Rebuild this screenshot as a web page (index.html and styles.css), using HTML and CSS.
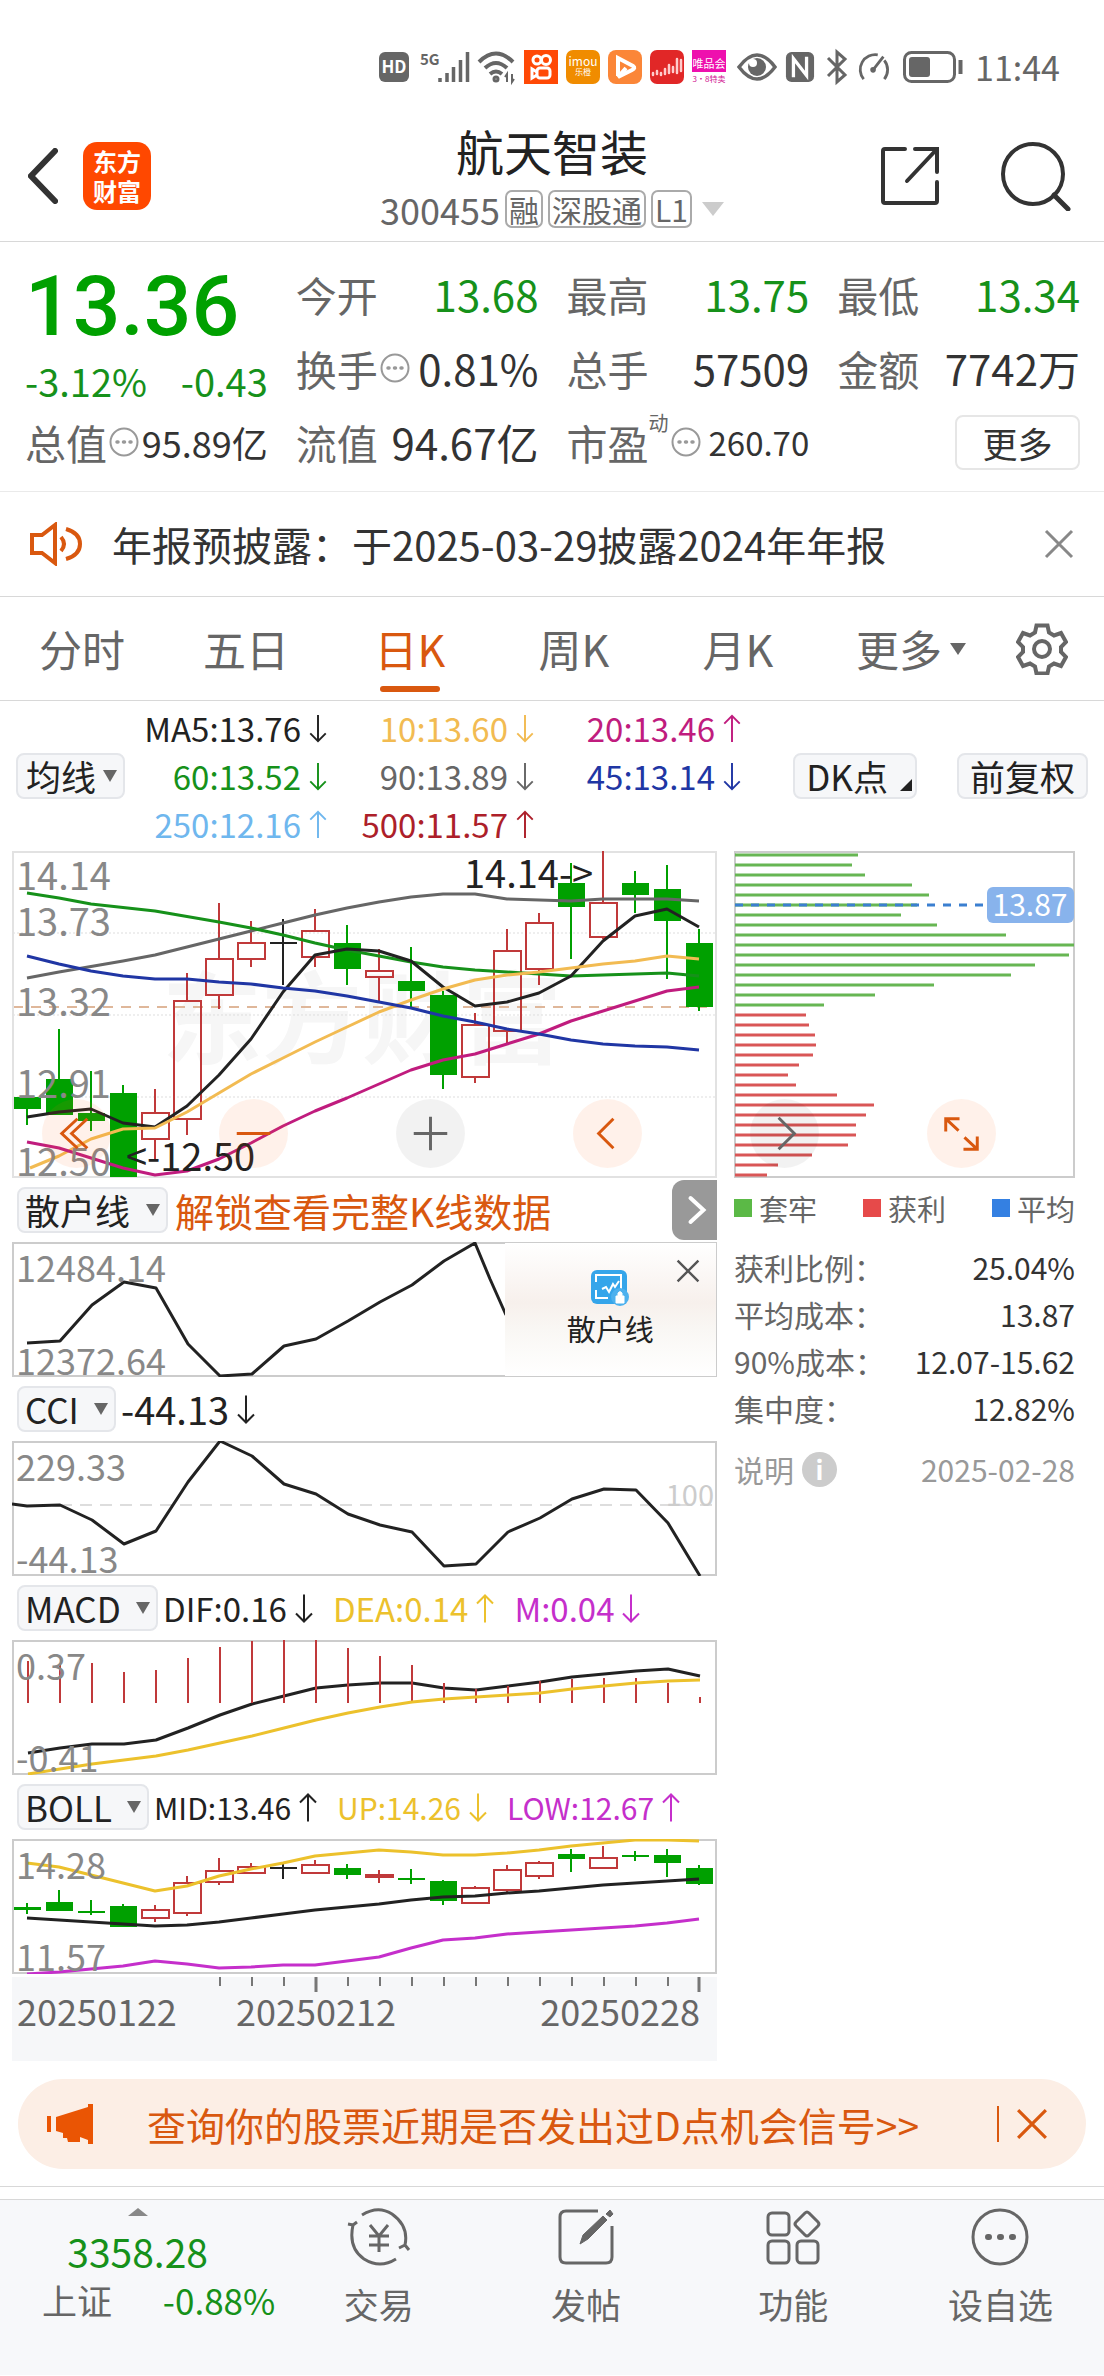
FILE: index.html
```html
<!DOCTYPE html>
<html lang="zh-CN">
<head>
    <meta charset="UTF-8">
    <meta name="viewport" content="width=device-width, initial-scale=1.0">
    <title>航天智装 300455</title>
    <link rel="stylesheet" href="styles.css">
</head>
<body>
    <svg class="sprite" aria-hidden="true">
        <symbol id="down" viewBox="0 0 18 30"><path d="M9 1v27M1 20l8 8 8-8"/></symbol>
        <symbol id="up" viewBox="0 0 18 30"><path d="M9 29V2M1 10l8-8 8 8"/></symbol>
        <symbol id="close" viewBox="0 0 30 30"><path d="M2 2l26 26M28 2L2 28"/></symbol>
        <symbol id="dots" viewBox="0 0 30 30"><circle cx="15" cy="15" r="13.5"/><path d="M8 15h1M14.500 15h1M21 15h1" stroke-width="3.500" stroke-linecap="round"/></symbol>
    </svg>

    <div class="status-bar">
        <svg class="hd" viewBox="0 0 30 30"><rect width="30" height="30" rx="6" fill="#666"/><text x="15" y="21" text-anchor="middle">HD</text></svg>
        <svg class="signal" viewBox="0 0 50 32"><text x="0" y="14">5G</text><path d="M20 27v4M27 22v9M33.500 16v15M40.500 9v22M47.500 1v30" stroke="#666" stroke-width="3.500"/></svg>
        <svg class="wifi" viewBox="0 0 38 32"><g stroke="#666" stroke-width="4"><path d="M1 11Q18 -6 35 11M7 17Q18 7 29 17M12 23q6-5 12 0"/><circle cx="18" cy="28" r="2" stroke-width="3"/><path d="M29 31v-8l-2 3M34 23v8l2-3" stroke-width="2"/></g></svg>
        <svg class="app" viewBox="0 0 34 34"><rect width="34" height="34" fill="#ff4906"/><g fill="none" stroke="#fff" stroke-width="3"><circle cx="13" cy="10" r="4"/><circle cx="22" cy="10" r="4.500"/><rect x="13" y="18" width="13" height="10" rx="3"/><path d="M13 22l-5-3v9l5-3"/></g></svg>
        <svg class="app" viewBox="0 0 34 34"><rect width="34" height="34" rx="7" fill="#f08c00"/><text x="17" y="16" font-size="12" text-anchor="middle" fill="#fff">imou</text><text x="17" y="25" font-size="8" text-anchor="middle" fill="#fff">乐橙</text></svg>
        <svg class="app" viewBox="0 0 34 34"><rect width="34" height="34" rx="8" fill="#fb8638"/><path d="M10 26V8l15 8q3 2-1 4L10 27l8-9" fill="none" stroke="#fff" stroke-width="4"/></svg>
        <svg class="app" viewBox="0 0 34 34"><rect width="34" height="34" rx="7" fill="#e12727"/><path d="M3 23v2M7 21v3M11 23v2M15 19v5M19 15v8M23 17v5M27 9v14M31 10v11" fill="none" stroke="#fcc" stroke-width="2.500" stroke-linecap="round"/></svg>
        <svg class="app" viewBox="0 0 34 34"><rect width="34" height="22" fill="#ee10ae"/><text x="17" y="18" font-size="11" text-anchor="middle" fill="#fff">唯品会</text><text x="17" y="32" font-size="8" text-anchor="middle" fill="#d0108f">3·8特卖</text></svg>
        <svg class="eye" viewBox="0 0 40 32"><path d="M2 16Q20-8 38 16 20 40 2 16z" fill="none" stroke="#666" stroke-width="3.500"/><circle cx="20" cy="16" r="9" fill="#666"/><circle cx="16" cy="12" r="4" fill="#fff"/></svg>
        <svg class="nfc" viewBox="0 0 30 32"><rect width="30" height="32" rx="6" fill="#666"/><path d="M8 27V7l14 18V5" fill="none" stroke="#fff" stroke-width="3.500"/></svg>
        <svg class="bt" viewBox="0 0 22 34"><path d="M2 8l17 17-8 7V2l8 7L2 26" fill="none" stroke="#666" stroke-width="3"/></svg>
        <svg class="gauge" viewBox="0 0 36 32"><path d="M7 29A16 16 0 0 1 22 3M29 9a16 16 0 0 1 0 20M28 5L17 19" fill="none" stroke="#666" stroke-width="3"/><circle cx="17" cy="19" r="3" fill="#666"/></svg>
        <svg class="battery" viewBox="0 0 60 32"><rect x="1.500" y="1.500" width="50" height="29" rx="7" fill="none" stroke="#666" stroke-width="3"/><rect x="6" y="6" width="21" height="20" rx="3" fill="#666"/><path d="M57.500 9v14" stroke="#666" stroke-width="4"/></svg>
        <span class="clock">11:44</span>
    </div>

    <header class="header">
        <div class="header-left">
            <button class="icon-btn" aria-label="返回"><svg width="30" height="56" viewBox="2 0 30 56"><path d="M29 3L5 28l24 25" stroke-width="6"/></svg></button>
            <a class="logo" href="#">东方<br>财富</a>
        </div>
        <div class="header-title">
            <h1>航天智装</h1>
            <div class="code">300455 <span class="tag">融</span><span class="tag">深股通</span><span class="tag">L1</span><i class="caret"></i></div>
        </div>
        <div class="header-right">
            <button class="icon-btn" aria-label="分享"><svg width="60" height="60" viewBox="0 0 60 60"><path d="M25 3H5q-2 0-2 2v50q0 2 2 2h50q2 0 2-2V36M35 3h22v23M57 3L27 35" stroke-width="4"/></svg></button>
            <button class="icon-btn" aria-label="搜索"><svg width="76" height="70" viewBox="0 0 76 70"><circle cx="33" cy="33" r="30" stroke-width="4"/><path d="M54 54l14 14" stroke-width="5"/></svg></button>
        </div>
    </header>

    <section class="quote">
        <div class="price">
            <strong>13.36</strong>
            <div class="change"><span>-3.12%</span><span>-0.43</span></div>
        </div>
        <div class="stat"><span>今开</span><b class="fall">13.68</b></div>
        <div class="stat"><span>最高</span><b class="fall">13.75</b></div>
        <div class="stat"><span>最低</span><b class="fall">13.34</b></div>
        <div class="stat"><span>换手<svg class="info"><use href="#dots"/></svg></span><b>0.81%</b></div>
        <div class="stat"><span>总手</span><b>57509</b></div>
        <div class="stat"><span>金额</span><b>7742万</b></div>
        <div class="stat"><span>总值<svg class="info"><use href="#dots"/></svg></span><b class="mid">95.89亿</b></div>
        <div class="stat"><span>流值</span><b>94.67亿</b></div>
        <div class="stat"><span>市盈<sup>动</sup><svg class="info"><use href="#dots"/></svg></span><b class="small">260.70</b></div>
        <div class="stat"><button class="more-btn">更多</button></div>
    </section>

    <div class="notice">
        <svg class="speaker" viewBox="0 0 52 44"><path d="M2 13h10L25 3v38L12 31H2zM31 15q6 7 0 14M36 7q14 4 14 15t-14 15"/></svg>
        <p>年报预披露：于2025-03-29披露2024年年报</p>
        <button class="close" aria-label="关闭"><svg><use href="#close"/></svg></button>
    </div>

    <nav class="tabs">
        <button>分时</button>
        <button>五日</button>
        <button class="active">日K</button>
        <button>周K</button>
        <button>月K</button>
        <button>更多<i class="caret"></i></button>
        <button aria-label="设置"><svg class="gear" viewBox="0 0 52 52"><path d="M20.500 2.500h11l1.500 7 5 3 7-2.500 5 9-5 5v5l5 5-5 9-7-2.500-5 3-1.500 7h-11l-1.500-7-5-3-7 2.500-5-9 5-5v-5l-5-5 5-9 7 2.500 5-3z"/><circle cx="26" cy="26" r="8"/></svg></button>
    </nav>

    <section class="ma">
        <span class="picker tight"><select aria-label="主图指标"><option>均线</option></select></span>
        <div class="ma-list">
            <span class="black">MA5:13.76<svg class="arrow"><use href="#down"/></svg></span>
            <span class="amber">10:13.60<svg class="arrow"><use href="#down"/></svg></span>
            <span class="pink">20:13.46<svg class="arrow"><use href="#up"/></svg></span>
            <span class="green">60:13.52<svg class="arrow"><use href="#down"/></svg></span>
            <span class="gray">90:13.89<svg class="arrow"><use href="#down"/></svg></span>
            <span class="blue">45:13.14<svg class="arrow"><use href="#down"/></svg></span>
            <span class="sky">250:12.16<svg class="arrow"><use href="#up"/></svg></span>
            <span class="crimson">500:11.57<svg class="arrow"><use href="#up"/></svg></span>
        </div>
        <div class="ma-actions">
            <button class="chip">DK点<i class="corner"></i></button>
            <button class="chip">前复权</button>
        </div>
    </section>

    <main class="board">
        <div class="charts">
            <div class="panel">
                <svg class="chart" viewBox="12 12 705 327">
                    <text class="watermark" x="162" y="217">东方财富</text>
                    <path class="dotted" d="M13 94h703M13 176h703M13 258h703"/>
                    <path class="last" d="M13 168h703"/>
                    <rect class="frame" x="13" y="13" width="703" height="325"/>
                    <path class="wick g" d="M27 244v42M59 190v80M91 232v60M123 246v20M347 86v60M411 108v60M443 152v98M571 24v96M635 32v42M667 26v114M699 90v82"/>
                    <path class="fill g" d="M14 258h27v12h-27zM46 240h27v36h-27zM78 274h27v8h-27zM110 254h27v84h-27zM334 104h27v26h-27zM398 142h27v10h-27zM430 156h27v80h-27zM558 44h27v24h-27zM622 44h27v12h-27zM654 50h27v32h-27zM686 104h27v64h-27z"/>
                    <path class="wick r" d="M155 250v24M155 300v20M187 134v28M187 280v16M219 64v56M219 156v14M251 82v22M251 120v8M315 70v22M315 118v10M379 110v22M379 138v24M475 174v12M475 238v6M507 90v22M507 192v12M539 74v10M539 130v16M603 12v52M603 98v2"/>
                    <path class="hollow r" d="M142 274h27v26h-27zM174 162h27v118h-27zM206 120h27v36h-27zM238 104h27v16h-27zM302 92h27v26h-27zM366 132h27v6h-27zM462 186h27v52h-27zM494 112h27v80h-27zM526 84h27v46h-27zM590 64h27v34h-27z"/>
                    <path class="wick k" d="M283 80v66M270 104h27"/>
                    <polyline class="line gray" points="27,139 59,133 123,122 155,116 187,108 219,100 251,92 283,84 315,76 347,69 379,63 411,58 443,55 475,55 507,60 571,62 603,60 667,60 699,62"/>
                    <polyline class="line green" points="27,54 59,59 91,65 155,72 219,83 251,89 283,96 315,104 347,111 379,117 411,123 443,128 475,131 507,133 539,135 571,137 603,136 635,135 667,134 699,137"/>
                    <polyline class="line black" points="27,278 59,273 91,270 123,284 155,288 187,267 219,236 251,200 283,153 315,116 347,110 379,112 411,122 443,148 475,167 507,163 539,154 571,137 603,102 635,77 667,70 699,88"/>
                    <polyline class="line amber" points="30,329 59,317 91,300 123,290 155,289 187,273 219,254 251,235 283,219 315,203 347,188 379,173 411,161 443,150 475,141 507,136 539,133 571,129 603,125 635,122 667,117 699,120"/>
                    <polyline class="line pink" points="27,303 59,309 91,319 123,329 155,336 187,332 219,320 251,304 283,287 315,272 347,259 379,245 411,231 443,221 475,215 507,205 539,195 571,182 603,172 635,162 667,152 699,148"/>
                    <polyline class="line blue" points="27,117 59,125 91,132 123,137 155,140 187,140 219,143 251,145 283,149 315,152 347,157 379,163 411,169 443,177 475,183 507,190 539,195 571,201 603,205 635,207 667,208 699,211"/>
                    <g class="scale">
                        <text x="16" y="51">14.14</text>
                        <text x="16" y="97">13.73</text>
                        <text x="16" y="177">13.32</text>
                        <text x="16" y="259">12.91</text>
                        <text x="16" y="337">12.50</text>
                    </g>
                    <g class="mark">
                        <text x="464" y="49">14.14-&gt;</text>
                        <text x="126" y="332">&lt;-12.50</text>
                    </g>
                </svg>
                <div class="tools">
                    <button aria-label="最左"><svg viewBox="0 0 70 70"><path d="M36 20L20 35l16 15M46 20L30 35l16 15"/></svg></button>
                    <button aria-label="缩小"><svg viewBox="0 0 70 70"><path d="M18 35h34"/></svg></button>
                    <button class="dim" aria-label="放大"><svg viewBox="0 0 70 70"><path d="M18 35h34M35 18v34"/></svg></button>
                    <button aria-label="左移"><svg viewBox="0 0 70 70"><path d="M41 20L26 35l15 15"/></svg></button>
                </div>
            </div>

            <div class="row">
                <span class="picker"><select aria-label="副图指标一"><option>散户线</option></select></span>
                <a class="unlock" href="#">解锁查看完整K线数据</a>
                <button class="next" aria-label="展开"><svg viewBox="0 0 44 60"><path d="M18 18l13 12-13 12"/></svg></button>
            </div>
            <div class="panel">
                <svg class="chart" viewBox="12 13 705 135">
                    <rect class="frame dark" x="13" y="14" width="703" height="133"/>
                    <polyline class="line black" points="27,114 60,112 92,76 124,53 156,59 188,115 220,147 252,145 284,117 316,110 348,92 380,73 412,56 444,32 475,14 490,50 506,86"/>
                    <g class="sub-scale"><text x="16" y="53">12484.14</text><text x="16" y="146">12372.64</text></g>
                </svg>
                <div class="locked">
                    <svg class="lock-icon" viewBox="0 0 38 36"><rect width="36" height="34" rx="6" fill="#35a5ea"/><path d="M5 12V5h25v16M5 20v8h12M11 19l4-2 3 5 4-8 2 3 4-6" fill="none" stroke="#fff" stroke-width="2"/><circle cx="29" cy="27" r="9" fill="#4db1ee"/><path d="M25 26h8v7h-8zM27 26v-3q2-3 4 0v3" fill="#fff" stroke="#fff"/></svg>
                    <span>散户线</span>
                    <button class="close" aria-label="关闭"><svg><use href="#close"/></svg></button>
                </div>
            </div>

            <div class="row">
                <span class="picker"><select aria-label="副图指标二"><option>CCI</option></select></span>
                <span class="value big black">-44.13<svg class="arrow"><use href="#down"/></svg></span>
            </div>
            <svg class="chart" viewBox="12 212 705 135">
                <rect class="frame dark" x="13" y="213" width="703" height="133"/>
                <path class="level" d="M60 276h656"/>
                <text class="level-text" x="714" y="277">100</text>
                <polyline class="line black" points="12,275 27,277 60,276 92,291 124,315 156,302 188,253 220,212 252,227 284,255 316,265 348,285 380,296 412,303 444,337 476,335 508,303 540,289 572,270 604,260 636,261 668,294 700,347"/>
                <g class="sub-scale"><text x="16" y="252">229.33</text><text x="16" y="344">-44.13</text></g>
            </svg>

            <div class="row">
                <span class="picker"><select aria-label="副图指标三"><option>MACD</option></select></span>
                <span class="value black">DIF:0.16<svg class="arrow"><use href="#down"/></svg></span>
                <span class="value gold">DEA:0.14<svg class="arrow"><use href="#up"/></svg></span>
                <span class="value violet">M:0.04<svg class="arrow"><use href="#down"/></svg></span>
            </div>
            <svg class="chart" viewBox="12 71 705 135">
                <rect class="frame dark" x="13" y="72" width="703" height="133"/>
                <polyline class="line black" points="28,184 60,179 92,175 124,175 156,171 188,159 220,146 252,135 284,127 316,119 348,116 380,114 412,114 444,119 476,121 508,117 540,113 572,108 604,105 636,102 668,100 700,107"/>
                <path class="wick r" d="M28 92v42M60 96v38M92 94v40M124 103v31M156 101v33M188 89v45M220 78v56M252 72v62M284 71v63M316 71v63M348 79v55M380 87v47M412 96v38M444 114v20M476 120v14M508 117v17M540 112v22M572 110v24M604 109v25M636 109v25M668 114v20M700 128v6"/>
                <polyline class="line gold" points="28,205 60,200 92,195 124,191 156,187 188,181 220,174 252,167 284,159 316,151 348,144 380,138 412,133 444,130 476,128 508,126 540,124 572,120 604,117 636,114 668,112 700,111"/>
                <g class="sub-scale"><text x="16" y="111">0.37</text><text x="16" y="203">-0.41</text></g>
            </svg>

            <div class="row">
                <span class="picker"><select aria-label="副图指标四"><option>BOLL</option></select></span>
                <span class="value narrow black">MID:13.46<svg class="arrow"><use href="#up"/></svg></span>
                <span class="value narrow gold">UP:14.26<svg class="arrow"><use href="#down"/></svg></span>
                <span class="value narrow violet">LOW:12.67<svg class="arrow"><use href="#up"/></svg></span>
            </div>
            <svg class="chart" viewBox="12 270 705 135">
                <rect class="frame dark" x="13" y="271" width="703" height="133"/>
                <path class="wick g" d="M27 334v11M59 321v15M91 331v15M123 335v5M347 295v15M411 300v15M443 311v25M571 280v23M635 282v10M667 280v28M699 296v20"/>
                <path class="fill g" d="M14 338h27v3h-27zM46 333h27v9h-27zM78 342h27v2h-27zM110 337h27v21h-27zM334 299h27v7h-27zM398 309h27v2h-27zM430 312h27v20h-27zM558 285h27v5h-27zM622 286h27v2h-27zM654 286h27v8h-27zM686 299h27v16h-27z"/>
                <path class="wick r" d="M155 336v5M155 349v4M187 307v7M187 344v3M219 289v13M219 313v3M251 294v4M315 291v5M379 301v13M475 317v2M507 296v5M507 321v3M539 292v2M539 307v3M603 277v12"/>
                <path class="hollow r" d="M142 341h27v8h-27zM174 314h27v30h-27zM206 302h27v11h-27zM238 298h27v6h-27zM302 296h27v8h-27zM366 306h27v2h-27zM462 319h27v15h-27zM494 301h27v20h-27zM526 294h27v13h-27zM590 289h27v10h-27z"/>
                <path class="wick k" d="M283 293v17M270 299h27"/>
                <polyline class="line gold" points="27,294 59,298 91,306 123,314 155,322 187,317 219,307 251,300 283,294 315,287 347,284 379,281 411,283 443,286 475,286 507,284 539,281 571,277 603,274 635,271 667,271 699,272"/>
                <polyline class="line black" points="27,349 59,351 91,353 123,355 155,357 187,356 219,353 251,349 283,345 315,341 347,338 379,335 411,331 443,328 475,327 507,324 539,322 571,319 603,316 635,314 667,312 699,310"/>
                <polyline class="line violet" points="27,405 59,403 91,400 123,397 155,392 187,395 219,399 251,398 283,396 315,396 347,392 379,388 411,379 443,371 475,369 507,365 539,363 571,361 603,359 635,357 667,354 699,350"/>
                <g class="sub-scale"><text x="16" y="310">14.28</text><text x="16" y="402">11.57</text></g>
            </svg>
            <svg class="chart axis" viewBox="12 0 705 84">
                <path d="M220 0v9M252 0v9M284 0v9M348 0v9M380 0v9M412 0v9M444 0v9M476 0v9M508 0v9M540 0v9M572 0v9M604 0v9M636 0v9M668 0v9"/>
                <path class="major" d="M316 0v15M699 0v15"/>
                <text x="17" y="49">20250122</text>
                <text x="316" y="49" text-anchor="middle">20250212</text>
                <text x="700" y="49" text-anchor="end">20250228</text>
            </svg>
        </div>

        <aside class="chips">
            <div class="panel">
                <svg class="chart" viewBox="0 0 341 327">
                    <rect class="frame dark" x="1" y="1" width="339" height="325"/>
                    <path class="bars trapped" d="M1 4h123M1 14h117M1 24h130M1 34h177M1 44h194M1 54h182M1 64h166M1 74h202M1 84h271M1 94h339M1 104h334M1 114h300M1 124h276M1 134h199M1 144h140M1 154h89"/>
                    <path class="bars profit" d="M1 164h71M1 174h74M1 184h80M1 194h81M1 204h78M1 214h64M1 224h53M1 234h61M1 244h102M1 254h139M1 264h131M1 274h121M1 284h121M1 294h113M1 304h77M1 314h43M1 324h32"/>
                    <path class="avg" d="M1 54h248"/>
                    <rect class="badge" x="253" y="36" width="87" height="36" rx="6"/>
                    <text class="avg-text" x="296" y="65">13.87</text>
                </svg>
                <div class="tools">
                    <button class="dim" aria-label="右移"><svg viewBox="0 0 70 70"><path d="M29 19l16 16-16 16"/></svg></button>
                    <button aria-label="全屏"><svg viewBox="0 0 70 70"><path d="M19 33V20h14M20 21l12 11M51 38v13H37M50 50L38 39"/></svg></button>
                </div>
            </div>
            <ul class="legend">
                <li><i class="box-green"></i>套牢</li>
                <li><i class="box-red"></i>获利</li>
                <li><i class="box-blue"></i>平均</li>
            </ul>
            <dl class="facts">
                <div><dt>获利比例：</dt><dd>25.04%</dd></div>
                <div><dt>平均成本：</dt><dd>13.87</dd></div>
                <div><dt>90%成本：</dt><dd>12.07-15.62</dd></div>
                <div><dt>集中度：</dt><dd>12.82%</dd></div>
            </dl>
            <div class="explain"><span>说明<i>i</i></span><span>2025-02-28</span></div>
        </aside>
    </main>

    <div class="promo">
        <svg class="horn" viewBox="0 0 46 40"><path d="M0 12h4v16H0zM9 13L41 3V0h5v40h-5v-4l-8-3v5H21l-1-4h-4v-5l-7-2z"/></svg>
        <a href="#">查询你的股票近期是否发出过D点机会信号&gt;&gt;</a>
        <button class="close" aria-label="关闭"><svg><use href="#close"/></svg></button>
    </div>

    <footer class="bottom">
        <a class="index" href="#">
            <i class="caret-up"></i>
            <b>3358.28</b>
            <span class="index-row"><span>上证</span><em>-0.88%</em></span>
        </a>
        <a class="item" href="#">
            <svg viewBox="0 0 66 58"><path d="M16 7Q32-3 46 6q17 12 13 31l4 5M59 37l-6 3M50 51Q34 61 18 51 2 40 7 17l-5-1M7 17l4-3M24 17l9 11 9-11M23 28h20M23 37h20M33 28v16"/></svg>
            交易
        </a>
        <a class="item" href="#">
            <svg viewBox="0 0 66 58"><path d="M45 3H13q-6 0-6 6v40q0 6 6 6h40q6 0 6-6V18"/><path d="M27 36l3-9L50 8l4 4-19 19zM53 6l4-4 3 4-3 3z" fill="#666" stroke-width="1"/></svg>
            发帖
        </a>
        <a class="item" href="#">
            <svg viewBox="0 0 66 58"><rect x="8" y="5" width="21" height="22" rx="4"/><rect x="8" y="33" width="21" height="22" rx="4"/><rect x="37" y="33" width="21" height="22" rx="4"/><path d="M45 5q2-2 4 0l9 9q2 2 0 4l-9 9q-2 2-4 0l-9-9q-2-2 0-4z"/></svg>
            功能
        </a>
        <a class="item" href="#">
            <svg viewBox="0 0 66 58"><circle cx="33" cy="29" r="27"/><path d="M21 29h1M33 29h1M45 29h1" stroke-width="6" stroke-linecap="round"/></svg>
            设自选
        </a>
    </footer>
</body>
</html>
```
FILE: styles.css
```css
* {
    box-sizing: border-box;
}

body {
    margin: 0;
    background: #fff;
    color: #333;
    font-family: "Noto Sans CJK SC", sans-serif;
    font-size: 34px;
    line-height: 48px;
}

h1, p, ul, dl, dd {
    margin: 0;
    padding: 0;
}

button, select {
    margin: 0;
    padding: 0;
    border: none;
    background: none;
    color: inherit;
    font: inherit;
    cursor: pointer;
}

a {
    color: inherit;
    text-decoration: none;
}

i, em {
    font-style: normal;
}

svg {
    display: block;
    flex: none;
    fill: none;
    stroke: currentColor;
}

text {
    stroke: none;
}

.sprite {
    position: absolute;
    width: 0;
    height: 0;
}

/* colours */
.black { color: #222; }
.amber { color: #f2bb52; }
.pink { color: #c01c7e; }
.green { color: #16911a; }
.gray { color: #666; }
.blue { color: #2036a4; }
.sky { color: #6fb7ee; }
.crimson { color: #ad1f2a; }
.gold { color: #ecc12c; }
.violet { color: #c52fcb; }
.g { color: #00a000; }
.r { color: #c0393a; }
.k { color: #222; }

/* status bar */
.status-bar {
    display: flex;
    align-items: center;
    justify-content: flex-end;
    gap: 8px;
    padding: 44px 44px 0;
    color: #666;
}

.status-bar svg {
    height: 34px;
    overflow: visible;
    stroke: none;
}

.status-bar .hd { width: 30px; height: 30px; }
.status-bar .signal { width: 50px; height: 32px; margin-left: 3px; }
.status-bar .wifi { width: 38px; height: 32px; }
.status-bar .app { width: 34px; }
.status-bar .eye { width: 40px; height: 32px; margin-left: 3px; }
.status-bar .nfc { width: 30px; height: 30px; }
.status-bar .bt { width: 22px; margin-left: 3px; }
.status-bar .gauge { width: 36px; height: 30px; }
.status-bar .battery { width: 60px; height: 32px; margin-left: 3px; }

.hd text {
    fill: #fff;
    font-size: 17px;
    font-weight: 700;
}

.signal text {
    fill: #666;
    font-size: 15px;
    font-weight: 700;
}

.clock {
    padding-left: 4px;
    font-size: 34px;
    line-height: 46px;
}

/* header */
.header {
    display: grid;
    grid-template-columns: 1fr auto 1fr;
    align-items: center;
    padding: 30px 28px 9px;
    border-bottom: 1px solid #d8d8d8;
}

.header-left, .header-right {
    display: flex;
    align-items: center;
    gap: 25px;
}

.header-right {
    justify-content: flex-end;
    gap: 60px;
}

.icon-btn svg {
    stroke-linecap: round;
}

.logo {
    width: 68px;
    height: 68px;
    padding: 4px 0;
    border-radius: 14px;
    background: #ff4800;
    color: #fff;
    font-size: 24px;
    font-weight: 700;
    line-height: 30px;
    text-align: center;
}

.header-title h1 {
    margin-bottom: 6px;
    color: #222;
    font-size: 48px;
    font-weight: 400;
    line-height: 60px;
    text-align: center;
}

.code {
    display: flex;
    align-items: center;
    gap: 5px;
    color: #666;
    font-size: 36px;
    line-height: 46px;
}

.tag {
    padding: 0 2px;
    border: 2px solid #aaa;
    border-radius: 7px;
    font-size: 30px;
    line-height: 34px;
}

.caret {
    border: 8px solid transparent;
    border-top: 12px solid #666;
    border-bottom: 0;
}

.code .caret {
    margin-left: 5px;
    border-width: 14px 11px 0;
    border-top-color: #ccc;
}

/* quote */
.quote {
    display: grid;
    grid-template-columns: repeat(4, 1fr);
    column-gap: 28px;
    padding: 15px 24px 12px 25px;
    border-bottom: 1px solid #eaeaea;
}

.price {
    grid-row: span 2;
    color: #00a000;
}

.price strong {
    display: block;
    font-family: Roboto, "Noto Sans CJK SC", sans-serif;
    font-size: 84px;
    font-weight: 500;
    line-height: 100px;
}

.change {
    display: flex;
    justify-content: space-between;
    color: #16911a;
    font-size: 38px;
}

.stat {
    display: flex;
    align-items: center;
    justify-content: space-between;
    color: #666;
    font-size: 41px;
    line-height: 74px;
    white-space: nowrap;
}

.stat span {
    display: flex;
    align-items: center;
}

.stat b {
    color: #333;
    font-size: 42px;
    font-weight: 400;
}

.stat b.fall { color: #16911a; }
.stat b.mid { font-size: 36px; }
.stat b.small { font-size: 33px; }

.stat sup {
    align-self: flex-start;
    font-size: 20px;
    line-height: 36px;
}

.info {
    width: 30px;
    height: 30px;
    margin: 0 2px;
    color: #999;
    stroke-width: 2;
}

.more-btn {
    width: 125px;
    margin-left: auto;
    border: 2px solid #e6e6e6;
    border-radius: 8px;
    color: #333;
    font-size: 35px;
    line-height: 51px;
}

/* notice */
.notice {
    display: flex;
    align-items: center;
    padding: 28px 30px;
    border-bottom: 1px solid #d8d8d8;
    font-size: 40px;
}

.speaker {
    width: 52px;
    height: 44px;
    margin-right: 30px;
    color: #d9580f;
    stroke-width: 4;
}

.close {
    margin-left: auto;
    color: #888;
}

.close svg {
    width: 30px;
    height: 30px;
    stroke-width: 3;
}

/* tabs */
.tabs {
    display: grid;
    grid-template-columns: repeat(5, 164fr) 182fr 80fr;
    padding-right: 22px;
    border-bottom: 1px solid #d8d8d8;
    color: #666;
    font-size: 43px;
    line-height: 103px;
}

.tabs button {
    position: relative;
    display: flex;
    align-items: center;
    justify-content: center;
    gap: 8px;
}

.tabs .active {
    color: #d9580f;
}

.tabs .active::after {
    position: absolute;
    bottom: 8px;
    left: 50%;
    width: 60px;
    height: 6px;
    margin-left: -30px;
    border-radius: 3px;
    background: #d9580f;
    content: "";
}

.gear {
    width: 52px;
    height: 52px;
    stroke-width: 4;
}

/* moving averages */
.ma {
    display: flex;
    align-items: center;
    padding: 3px 16px;
}

.ma-list {
    display: grid;
    grid-template-columns: 202px 207px 207px;
    justify-items: end;
}

.ma-list span {
    display: flex;
    align-items: center;
    gap: 8px;
    font-size: 33px;
    white-space: nowrap;
}

.arrow {
    width: 18px;
    height: 29px;
    stroke-width: 2;
}

.ma-actions {
    display: flex;
    gap: 40px;
    margin-left: auto;
}

.chip, .picker select {
    border: 2px solid #e4e6ea;
    border-radius: 8px;
    background: #f6f7f9;
    color: #222;
    font-size: 35px;
    line-height: 42px;
}

.chip {
    display: flex;
    padding: 0 11px;
}

.corner {
    align-self: flex-end;
    margin: 0 -8px 6px 12px;
    border-bottom: 12px solid #222;
    border-left: 12px solid transparent;
}

.picker {
    position: relative;
    display: flex;
}

.picker select {
    padding: 0 35px 0 6px;
    appearance: none;
}

.picker::after {
    position: absolute;
    top: 17px;
    right: 8px;
    border: 7px solid transparent;
    border-top: 12px solid #666;
    border-bottom: 0;
    content: "";
    pointer-events: none;
}

.picker.tight select {
    padding: 0 26px 0 8px;
}

/* charts */
.board {
    display: grid;
    grid-template-columns: minmax(0, 705fr) minmax(0, 341fr);
    gap: 17px;
    padding: 0 29px 0 12px;
}

.panel {
    position: relative;
}

.chart {
    width: 100%;
    height: auto;
}

.chart text {
    fill: #888;
}

.frame {
    stroke: #e2e2e2;
    stroke-width: 2;
}

.frame.dark {
    stroke: #ccc;
}

.chart .watermark {
    fill: #f6f6f6;
    font-size: 100px;
    font-weight: 700;
}

.dotted {
    stroke: #ddd;
    stroke-dasharray: 2 2;
}

.last {
    stroke: #dfb79a;
    stroke-width: 2;
    stroke-dasharray: 10 8;
}

.wick, .hollow {
    stroke-width: 2;
}

.fill {
    fill: currentColor;
    stroke: none;
}

.line {
    stroke-width: 3;
    stroke-linejoin: round;
}

.scale text, .mark text {
    font-size: 38px;
}

.chart .mark text {
    fill: #222;
}

.sub-scale text, .axis text {
    font-size: 36px;
}

.level {
    stroke: #ddd;
    stroke-width: 2;
    stroke-dasharray: 12 8;
}

.chart .level-text {
    fill: #ccc;
    font-size: 29px;
    text-anchor: end;
}

.axis {
    margin-top: 3px;
    background: #f6f7f9;
    color: #777;
    stroke-width: 2;
}

.axis .major {
    stroke-width: 3;
}

.axis text {
    fill: #666;
}

.tools {
    position: absolute;
    bottom: 10px;
    left: 30px;
    display: flex;
    gap: 108px;
}

.chips .tools {
    left: 16px;
}

.tools button {
    border-radius: 50%;
    background: rgba(255, 96, 24, 0.09);
    color: #d9580f;
}

.tools .dim {
    background: rgba(0, 0, 0, 0.05);
    color: #666;
}

.tools svg {
    width: 69px;
    height: 69px;
    stroke-width: 3;
}

/* indicator rows */
.row {
    display: flex;
    align-items: center;
    height: 64px;
    padding-left: 5px;
    white-space: nowrap;
}

.unlock {
    padding-left: 7px;
    color: #d9580f;
    font-size: 39px;
}

.next {
    align-self: stretch;
    margin: 2px 0;
    margin-left: auto;
    border-radius: 12px 0 0 12px;
    background: #999;
    color: #fff;
}

.next svg {
    width: 45px;
    height: 60px;
    stroke-width: 4;
    stroke-linecap: round;
}

.value {
    display: flex;
    align-items: center;
    gap: 8px;
    padding: 0 15px 0 5px;
    font-size: 33px;
}

.value.big {
    font-size: 38px;
}

.value.narrow {
    font-size: 30px;
}

.value .arrow {
    height: 33px;
}

.locked {
    position: absolute;
    top: 1px;
    right: 1px;
    bottom: 1px;
    width: 30%;
    padding-top: 27px;
    background: linear-gradient(#fff, #f7f0ec 45%, #f9f7f4 65%, #fff);
    color: #222;
    font-size: 29px;
    line-height: 44px;
    text-align: center;
}

.lock-icon {
    width: 38px;
    height: 36px;
    margin: 0 auto;
    stroke: none;
}

.locked .close {
    position: absolute;
    top: 16px;
    right: 16px;
    color: #555;
}

.locked .close svg {
    width: 24px;
    height: 24px;
}

/* chip distribution */
.bars {
    stroke-width: 3;
}

.trapped { stroke: #67b653; }
.profit { stroke: #d95656; }

.avg {
    stroke: #3b7fd0;
    stroke-width: 3;
    stroke-dasharray: 8 8;
}

.badge {
    fill: #88b3ec;
    stroke: none;
}

.chart .avg-text {
    fill: #fff;
    font-size: 30px;
    text-anchor: middle;
}

.legend {
    display: flex;
    justify-content: space-between;
    margin-bottom: 6px;
    color: #666;
    font-size: 29px;
    line-height: 60px;
    list-style: none;
}

.legend li {
    display: flex;
    align-items: center;
    gap: 7px;
}

.legend i {
    width: 18px;
    height: 18px;
}

.box-green { background: #5bb946; }
.box-red { background: #e64a4a; }
.box-blue { background: #3480e2; }

.facts {
    font-size: 30px;
    line-height: 47px;
}

.facts div, .explain {
    display: flex;
    justify-content: space-between;
}

.facts dt {
    color: #666;
}

.explain {
    margin-top: 10px;
    color: #999;
    font-size: 30px;
    line-height: 54px;
}

.explain span {
    display: flex;
    align-items: center;
    gap: 8px;
}

.explain i {
    width: 35px;
    height: 35px;
    border-radius: 50%;
    background: #ccc;
    color: #fff;
    font-size: 26px;
    font-weight: 700;
    line-height: 33px;
    text-align: center;
}

/* promo */
.promo {
    display: flex;
    align-items: center;
    margin: 18px 18px 17px;
    padding: 21px 38px 21px 29px;
    border-radius: 45px;
    background: #fceee5;
    color: #d9580f;
    font-size: 39px;
}

.horn {
    width: 46px;
    height: 40px;
    margin-right: 54px;
    fill: #ea5504;
    stroke: none;
}

.promo .close {
    padding-left: 17px;
    border-left: 2px solid #d9580f;
    color: #d9580f;
}

.promo .close svg {
    width: 32px;
    height: 36px;
}

/* bottom bar */
.bottom {
    display: grid;
    grid-template-columns: 275fr repeat(4, 207fr);
    min-height: 189px;
    padding-top: 21px;
    border-top: 1px solid #d8d8d8;
    background: linear-gradient(#fff 12px, #d8d8d8 12px, #d8d8d8 13px, #f7f8fa 13px);
    color: #666;
}

.index {
    display: flex;
    flex-direction: column;
    align-items: center;
}

.caret-up {
    border: 10px solid transparent;
    border-top: 0;
    border-bottom: 8px solid #888;
}

.index b {
    margin-top: 10px;
    color: #16911a;
    font-size: 39px;
    font-weight: 400;
    line-height: 50px;
}

.index-row {
    display: flex;
    align-self: stretch;
    justify-content: space-between;
    padding-left: 42px;
    font-size: 35px;
}

.index em {
    color: #16911a;
}

.item {
    display: flex;
    flex-direction: column;
    align-items: center;
    gap: 14px;
    font-size: 35px;
}

.item svg {
    width: 66px;
    height: 58px;
    stroke-width: 3;
}
```
